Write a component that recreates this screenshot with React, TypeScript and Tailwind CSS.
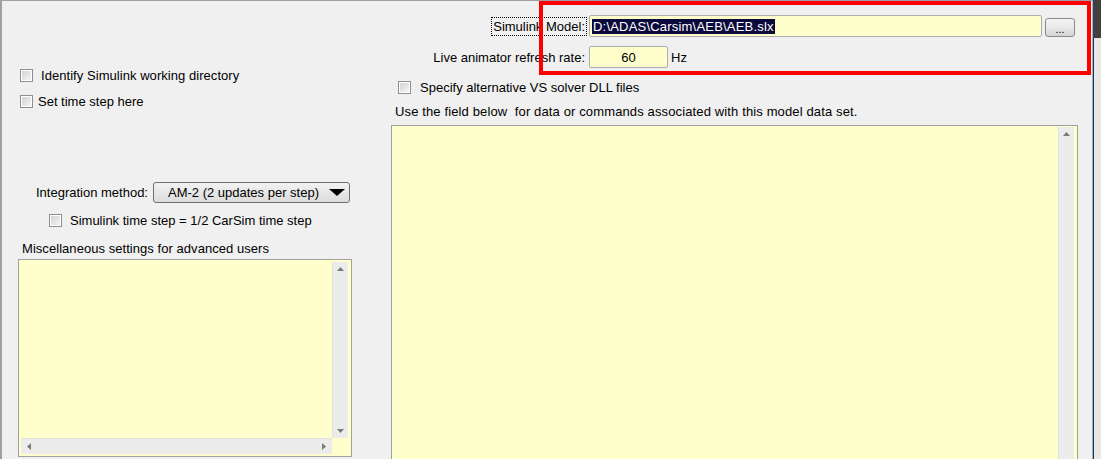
import React from "react";

const font = "font-['Liberation_Sans',Arial,sans-serif]";

function CheckBox() {
  return (
    <div className="h-[13px] w-[13px] shrink-0 border border-[#8e8f8f] bg-white p-[1px]">
      <div className="h-full w-full bg-gradient-to-br from-[#d3d3d3] to-[#f4f4f4]" />
    </div>
  );
}

function Arrow({ dir }: { dir: "up" | "down" | "left" | "right" }) {
  const pts = {
    up: "0,4 3.5,0 7,4",
    down: "0,0 7,0 3.5,4",
    left: "4,0 4,7 0,3.5",
    right: "0,0 0,7 4,3.5",
  }[dir];
  const vert = dir === "up" || dir === "down";
  return (
    <svg width={vert ? 7 : 4} height={vert ? 4 : 7} className="block">
      <polygon points={pts} fill="#7a7a7a" />
    </svg>
  );
}

function VScroll({ bottom = true }: { bottom?: boolean }) {
  return (
    <div className="flex w-[16px] flex-col items-center justify-between border-l border-[#e2e2e2] bg-[#ececec] py-[5px]">
      <Arrow dir="up" />
      {bottom && <Arrow dir="down" />}
    </div>
  );
}

export default function App() {
  return (
    <div className={`relative flex h-[459px] w-[1101px] overflow-hidden text-[13px] leading-[15px] text-black ${font}`}>
      {/* main dialog panel */}
      <div className="flex w-[1092px] shrink-0 flex-col border-l-2 border-t border-[#a0a0a0] bg-[#f0f0f0]">
        {/* Simulink model row */}
        <div className="mt-[14px] flex h-[22px] items-center">
          <div className="flex w-[585px] justify-end">
            <span className="border border-dotted border-black px-[1px] leading-[17px]">Simulink Model:</span>
          </div>
          <div className="ml-[2px] flex h-[22px] w-[453px] items-center rounded-[2px] border border-[#abadb3] bg-[#ffffcc] pl-[2px]">
            <span className="bg-[#0a0a3c] px-[1px] leading-[15px] tracking-[0.2px] text-white">D:\ADAS\Carsim\AEB\AEB.slx</span>
          </div>
          <button className="ml-[3px] mt-[3px] flex h-[19px] w-[30px] items-end justify-center rounded-[3px] border border-[#8a8a8a] bg-gradient-to-b from-[#f4f4f4] via-[#e9e9e9] to-[#d4d4d4] pb-[1px] text-[11px] leading-[11px]">
            ...
          </button>
        </div>

        {/* refresh rate row */}
        <div className="mt-[9px] flex h-[22px] items-center">
          <div className="w-[583px] text-right">Live animator refresh rate:</div>
          <div className="ml-[4px] flex h-[22px] w-[79px] items-center justify-center rounded-[2px] border border-[#abadb3] bg-[#ffffcc]">
            60
          </div>
          <span className="ml-[3px]">Hz</span>
        </div>

        <div className="flex flex-1">
          {/* left column */}
          <div className="flex w-[389px] shrink-0 flex-col">
            <div className="mt-[1px] flex h-[13px] items-center pl-[18px]">
              <CheckBox />
              <span className="ml-[8px] tracking-[0.05px]">Identify Simulink working directory</span>
            </div>
            <div className="mt-[13px] flex h-[13px] items-center pl-[18px]">
              <CheckBox />
              <span className="ml-[5px]">Set time step here</span>
            </div>

            <div className="mt-[73px] flex h-[22px] items-center">
              <div className="w-[146px] text-right">Integration method:</div>
              <div className="ml-[5px] flex h-[21px] w-[197px] items-center justify-between rounded-[3px] border border-[#707070] bg-gradient-to-b from-[#f2f2f2] to-[#dcdcdc] pl-[14px] pr-[4px]">
                <span>AM-2 (2 updates per step)</span>
                <svg width="16" height="7" className="block">
                  <polygon points="0,0 16,0 8,7" fill="#000" />
                </svg>
              </div>
            </div>

            <div className="mt-[11px] flex h-[13px] items-center pl-[47px]">
              <CheckBox />
              <span className="ml-[8px]">Simulink time step = 1/2 CarSim time step</span>
            </div>

            <div className="mt-[14px] h-[15px] pl-[20px] tracking-[0.05px]">Miscellaneous settings for advanced users</div>

            <div className="ml-[16px] mt-[3px] grid h-[198px] w-[334px] grid-cols-[1fr_16px] grid-rows-[1fr_16px] border border-[#a0a0a0] bg-[#ffffcc] p-[2px] pr-[3px]">
              <div />
              <VScroll />
              <div className="flex items-center justify-between border-t border-[#e2e2e2] bg-[#ececec] px-[6px]">
                <Arrow dir="left" />
                <Arrow dir="right" />
              </div>
              <div />
            </div>
          </div>

          {/* right column */}
          <div className="flex flex-1 flex-col">
            <div className="mt-[13px] flex h-[13px] items-center pl-[7px]">
              <CheckBox />
              <span className="ml-[9px]">Specify alternative VS solver DLL files</span>
            </div>
            <div className="mt-[10px] h-[15px] whitespace-pre pl-[4px] tracking-[0.13px]">
              Use the field below  for data or commands associated with this model data set.
            </div>
            <div className="mt-[6px] flex w-[687px] flex-1 border border-b-0 border-[#a0a0a0] bg-[#ffffcc] pr-[3px] pt-[1px]">
              <div className="flex-1" />
              <VScroll bottom={false} />
            </div>
          </div>
        </div>
      </div>

      {/* neighbouring window edge */}
      <div className="flex w-[9px] flex-col border-l border-[#8ab8e6]">
        <div className="h-[38px] bg-[#404040]" />
        <div className="flex-1 border-l border-[#303030] bg-[#e8e8e8]" />
      </div>

      {/* red annotation box */}
      <div className="absolute left-[539px] top-[1px] h-[74px] w-[552px] border-4 border-[#ff0000]" />
    </div>
  );
}
